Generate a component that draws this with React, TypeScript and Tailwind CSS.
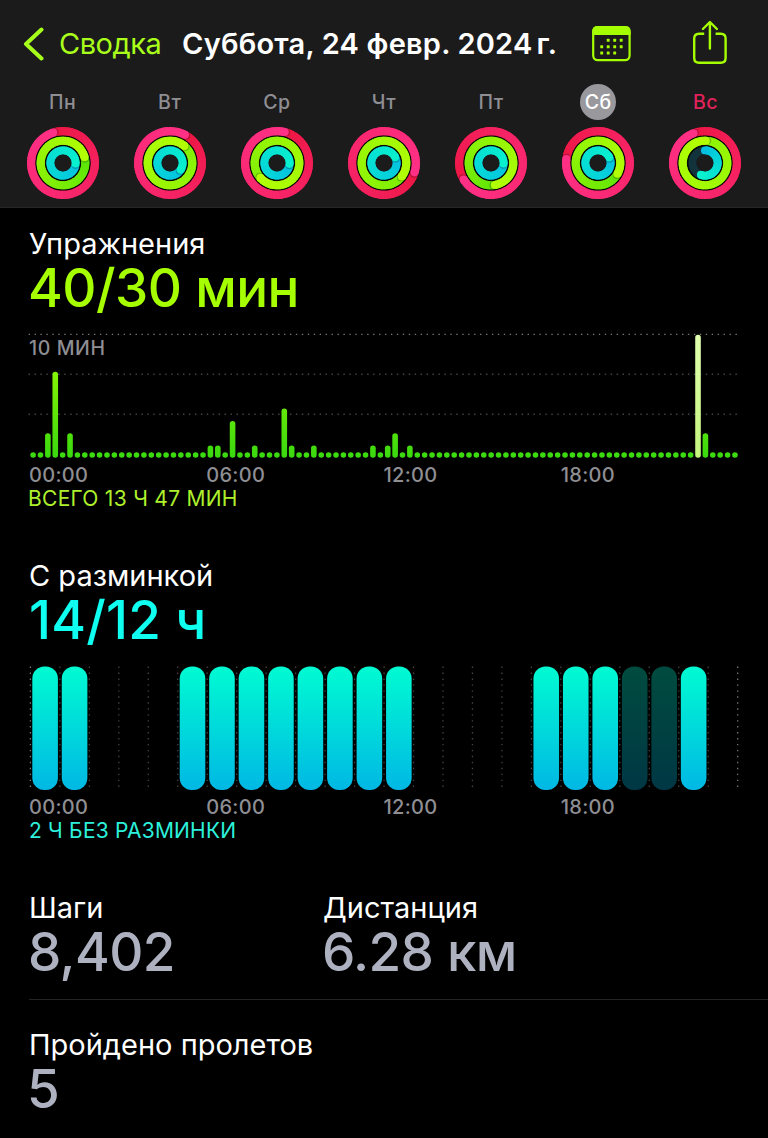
import type { ReactNode } from 'react';

type Rgb = [number, number, number];

interface RingSpec {
  radius: number;
  from: Rgb;
  to: Rgb;
  track: string;
}

interface Day {
  label: string;
  // head position of the move / exercise / stand rings, in degrees
  heads: [number, number, number];
  // where in the gradient the exercise ring starts, higher after several laps
  exerciseStart?: number;
  standOpen?: boolean;
}

const RING_WIDTH = 8.1;

const RINGS: RingSpec[] = [
  { radius: 31.9, from: [236, 22, 66], to: [255, 48, 134], track: '#3a0d18' },
  { radius: 22.3, from: [84, 226, 8], to: [178, 254, 4], track: '#1c3a08' },
  { radius: 12.5, from: [4, 190, 226], to: [8, 240, 206], track: '#12333b' },
];

const DAYS: Day[] = [
  { label: 'Пн', heads: [-18, 75, 92] },
  { label: 'Вт', heads: [28, 40, 122], exerciseStart: 0.45 },
  { label: 'Ср', heads: [14, 228, 94], exerciseStart: 0.45 },
  { label: 'Чт', heads: [107, 127, 62], exerciseStart: 0.4 },
  { label: 'Пт', heads: [239, 170, 92], exerciseStart: 0.1 },
  { label: 'Сб', heads: [277, 119, 63], exerciseStart: 0.1 },
  { label: 'Вс', heads: [-21, 2, 199], exerciseStart: 0.6, standOpen: true },
];

// minutes of exercise per quarter hour, only the non-empty slots
const EXERCISE: Record<number, number> = {
  2: 2, 3: 7, 5: 2, 24: 1, 25: 1, 27: 3, 30: 1, 34: 4, 35: 1,
  38: 1, 46: 1, 48: 1, 49: 2, 51: 1, 90: 10, 91: 2,
};
const SELECTED_SLOT = 90;

const STAND_HOURS = [0, 1, 5, 6, 7, 8, 9, 10, 11, 12, 17, 18, 19, 22];
const IDLE_HOURS = [20, 21];

const HOURS = ['00:00', '06:00', '12:00', '18:00'];

const mix = (a: Rgb, b: Rgb, t: number) =>
  `rgb(${a.map((v, i) => Math.round(v + (b[i] - v) * t)).join(',')})`;

const polar = (r: number, deg: number) => {
  const a = ((deg - 90) * Math.PI) / 180;
  return [36 + r * Math.cos(a), 36 + r * Math.sin(a)];
};

interface RingProps {
  spec: RingSpec;
  head: number;
  startAt?: number;
  open?: boolean;
}

function Ring({ spec, head, startAt = 0, open }: RingProps) {
  const steps = 60;
  const start = open ? 0 : head - 360;
  const sweep = head - start;
  const arcs = [];
  for (let i = 0; i < steps; i++) {
    // every arc runs a little under the next one, so no seams show
    const a0 = start + (sweep * i) / steps;
    const a1 = start + (sweep * (i + 1)) / steps + (i < steps - 1 ? 5 : 0);
    const [x0, y0] = polar(spec.radius, a0);
    const [x1, y1] = polar(spec.radius, a1);
    const t = startAt + (1 - startAt) * Math.pow(i / (steps - 1), 0.75);
    arcs.push(
      <path
        key={i}
        d={`M${x0} ${y0}A${spec.radius} ${spec.radius} 0 0 1 ${x1} ${y1}`}
        stroke={mix(spec.from, spec.to, t)}
        strokeWidth={RING_WIDTH}
        fill="none"
      />
    );
  }
  const [hx, hy] = polar(spec.radius, head);
  const [sx, sy] = polar(spec.radius, head + 80 / spec.radius);
  const [ox, oy] = polar(spec.radius, 0);
  return (
    <g>
      <circle cx="36" cy="36" r={spec.radius} fill="none" stroke={spec.track} strokeWidth={RING_WIDTH} />
      {open && <circle cx={ox} cy={oy} r={RING_WIDTH / 2} fill={mix(spec.from, spec.to, 0)} />}
      {arcs}
      {!open && <circle cx={sx} cy={sy} r={RING_WIDTH / 2} fill="#000" opacity={0.22} />}
      <circle cx={hx} cy={hy} r={RING_WIDTH / 2} fill={mix(spec.from, spec.to, 1)} />
    </g>
  );
}

function ActivityRings({ day }: { day: Day }) {
  return (
    <svg width="72" height="72" viewBox="0 0 72 72">
      <circle cx="36" cy="36" r="35" fill="#070a06" />
      {RINGS.map((spec, i) => (
        <Ring
          key={i}
          spec={spec}
          head={day.heads[i]}
          startAt={i === 1 ? day.exerciseStart : 0}
          open={i === 2 && day.standOpen}
        />
      ))}
      <circle cx="36" cy="36" r="8.5" fill="#1b1b1c" />
    </svg>
  );
}

function CalendarIcon() {
  const dots = [
    [16.2, 14.3], [22.7, 14.3], [29.2, 14.3],
    [9.7, 20.7], [16.2, 20.7], [22.7, 20.7], [29.2, 20.7],
    [9.7, 27], [16.2, 27], [22.7, 27],
  ];
  return (
    <svg width="39" height="36" viewBox="0 0 39 36" fill="#a6ff00">
      <rect x="1.2" y="1.2" width="36.4" height="33" rx="4.6" fill="none" stroke="#a6ff00" strokeWidth="2.2" />
      <path d="M0.2 9V5.5Q0.2 0.1 5.6 0.1H33.2Q38.6 0.1 38.6 5.5V9Z" />
      {dots.map(([x, y]) => (
        <rect key={`${x}-${y}`} x={x - 1.45} y={y - 1.45} width="2.9" height="2.9" rx="0.5" />
      ))}
    </svg>
  );
}

function ShareIcon() {
  return (
    <svg width="36" height="45" viewBox="0 0 36 45" fill="none" stroke="#a6ff00" strokeWidth="2.4" strokeLinecap="round" strokeLinejoin="round">
      <path d="M12.2 13.8H7Q2.2 13.8 2.2 18.6V38Q2.2 42.7 7 42.7H28.8Q33.6 42.7 33.6 38V18.6Q33.6 13.8 28.8 13.8H23.6" strokeLinecap="butt" />
      <path d="M17.9 28.6V2.2M10.9 9L17.9 2L24.9 9" />
    </svg>
  );
}

function HourLabels() {
  return (
    <div className="mt-px grid h-6 w-[709px] grid-cols-4 text-[20px] leading-6 font-medium tracking-[0.3px] text-[#8e8e93]">
      {HOURS.map((h) => (
        <span key={h}>{h}</span>
      ))}
    </div>
  );
}

function ExerciseChart() {
  return (
    <svg className="-ml-px block" width="714" height="132" viewBox="28 330 714 132">
      <defs>
        <linearGradient id="exercise" gradientUnits="userSpaceOnUse" x1="0" y1="334" x2="0" y2="458">
          <stop offset="0" stopColor="#a6ff00" />
          <stop offset="1" stopColor="#39d90f" />
        </linearGradient>
        <linearGradient id="selected" gradientUnits="userSpaceOnUse" x1="0" y1="334" x2="0" y2="458">
          <stop offset="0" stopColor="#e0ffb0" />
          <stop offset="1" stopColor="#c4f57c" />
        </linearGradient>
      </defs>
      {[334.4, 374.3, 414.2].map((y, i) => (
        <line key={y} x1="28.6" x2="739" y1={y} y2={y} stroke={i === 0 ? '#77777a' : '#444446'} strokeWidth="1.4" strokeDasharray="1.4 4.54" />
      ))}
      {Array.from({ length: 96 }, (_, i) => {
        const value = EXERCISE[i] ?? 0;
        const h = value ? value * 12.3 : 5.6;
        return (
          <rect
            key={i}
            x={30.3 + i * 7.388}
            y={457.8 - h}
            width="5.6"
            height={h}
            rx="2.8"
            fill={i === SELECTED_SLOT ? 'url(#selected)' : 'url(#exercise)'}
          />
        );
      })}
    </svg>
  );
}

function StandChart() {
  return (
    <svg className="-ml-px block" width="714" height="132" viewBox="28 662 714 132">
      <defs>
        <linearGradient id="stand" x1="0" y1="0" x2="0" y2="1">
          <stop offset="0" stopColor="#00fbd2" />
          <stop offset="1" stopColor="#00b8e4" />
        </linearGradient>
      </defs>
      {Array.from({ length: 25 }, (_, i) => (
        <line
          key={i}
          x1={30.4 + i * 29.47}
          x2={30.4 + i * 29.47}
          y1="666.6"
          y2="789"
          stroke={i === 0 || i === 24 ? '#77777a' : '#444446'}
          strokeWidth="1.3"
          strokeDasharray="1.4 4.55"
        />
      ))}
      {[...STAND_HOURS, ...IDLE_HOURS].map((h) => (
        <g key={h}>
          <rect x={32.3 + h * 29.48} y="666.5" width="25.6" height="123.4" rx="12" fill="#000" />
          <rect
            x={32.3 + h * 29.48}
            y="666.5"
            width="25.6"
            height="123.4"
            rx="12"
            fill="url(#stand)"
            opacity={IDLE_HOURS.includes(h) ? 0.3 : 1}
          />
        </g>
      ))}
    </svg>
  );
}

function Heading({ children }: { children: ReactNode }) {
  return <h2 className="text-[29px] leading-9 font-normal whitespace-nowrap text-white">{children}</h2>;
}

export default function App() {
  return (
    <div className="h-[1138px] w-[768px] overflow-hidden bg-black font-[Inter,'Liberation_Sans',sans-serif]">
      <header className="h-[208px] border-b border-[#262626] bg-[#1b1b1c]">
        <div className="flex h-[84px] items-start">
          <button className="flex h-[87px] items-center pl-[22px] text-[29px] tracking-[-0.5px] text-[#a9ff1a]">
            <svg width="22" height="36" viewBox="0 0 22 36" fill="none" stroke="#a6ff1a" strokeWidth="4" strokeLinecap="round" strokeLinejoin="round">
              <path d="M19.5 3.5L4 18L19.5 32.5" />
            </svg>
            <span className="ml-[15px] w-[106px] pt-px text-left whitespace-nowrap">Сводка</span>
          </button>
          <h1 className="ml-[17px] flex h-[88px] w-[394px] items-center text-[29px] font-semibold tracking-[0.2px] whitespace-nowrap text-white">
            Суббота, 24 февр. 2024<span className="ml-1">г.</span>
          </h1>
          <button className="mt-[26px] ml-4">
            <CalendarIcon />
          </button>
          <button className="mt-5 ml-[61px]">
            <ShareIcon />
          </button>
        </div>
        <div className="grid w-[768px] grid-cols-7 pr-[9px] pl-[9px]">
          {DAYS.map((day) => (
            <div key={day.label} className="flex flex-col items-center">
              <span
                className={`flex h-9 w-9 items-center justify-center rounded-full pt-[2px] text-[19.5px] font-medium tracking-[0.5px] ${
                  day.label === 'Сб' ? 'bg-[#98989d] text-white' : day.label === 'Вс' ? 'text-[#e0225a]' : 'text-[#8e8e93]'
                }`}
              >
                {day.label}
              </span>
              <div className="mt-[7px]">
                <ActivityRings day={day} />
              </div>
            </div>
          ))}
        </div>
      </header>

      <main className="pt-[18px] pl-[29px]">
        <section>
          <Heading>Упражнения</Heading>
          <p className="-mt-1 -ml-px h-[60px] text-[53px] leading-[60px] font-medium tracking-[-0.5px] whitespace-nowrap text-[#a6ff00]">40/30 мин</p>
          <div className="relative mt-3">
            <ExerciseChart />
            <span className="absolute top-[6px] left-0 text-[19.5px] leading-6 font-medium tracking-[0.6px] text-[#8e8e93]">10 МИН</span>
          </div>
          <HourLabels />
          <p className="-ml-px text-[21px] leading-6 tracking-[0.28px] whitespace-nowrap text-[#aff02c]">ВСЕГО 13 Ч 47 МИН</p>
        </section>

        <section className="mt-[47px]">
          <Heading>С разминкой</Heading>
          <p className="-mt-1 h-[60px] text-[53px] leading-[60px] font-medium tracking-[0.2px] whitespace-nowrap text-[#0ffff0]">14/12 ч</p>
          <div className="mt-3">
            <StandChart />
          </div>
          <HourLabels />
          <p className="text-[21px] leading-6 tracking-[0.2px] whitespace-nowrap text-[#2cf0dc]">2 Ч БЕЗ РАЗМИНКИ</p>
        </section>

        <section className="mt-[47px] flex h-[110px] border-b border-[#242426]">
          <div className="w-[294px]">
            <Heading>Шаги</Heading>
            <p className="-mt-1 -ml-px text-[53px] leading-[60px] font-medium tracking-[-0.6px] text-[#aeb1c0]">8,402</p>
          </div>
          <div>
            <Heading>Дистанция</Heading>
            <p className="-mt-1 -ml-px text-[53px] leading-[60px] font-medium tracking-[-0.6px] text-[#aeb1c0]">6.28 км</p>
          </div>
        </section>

        <section className="mt-[27px]">
          <Heading>Пройдено пролетов</Heading>
          <p className="-mt-1 -ml-[2px] text-[53px] leading-[60px] font-medium text-[#aeb1c0]">5</p>
        </section>
      </main>
    </div>
  );
}
